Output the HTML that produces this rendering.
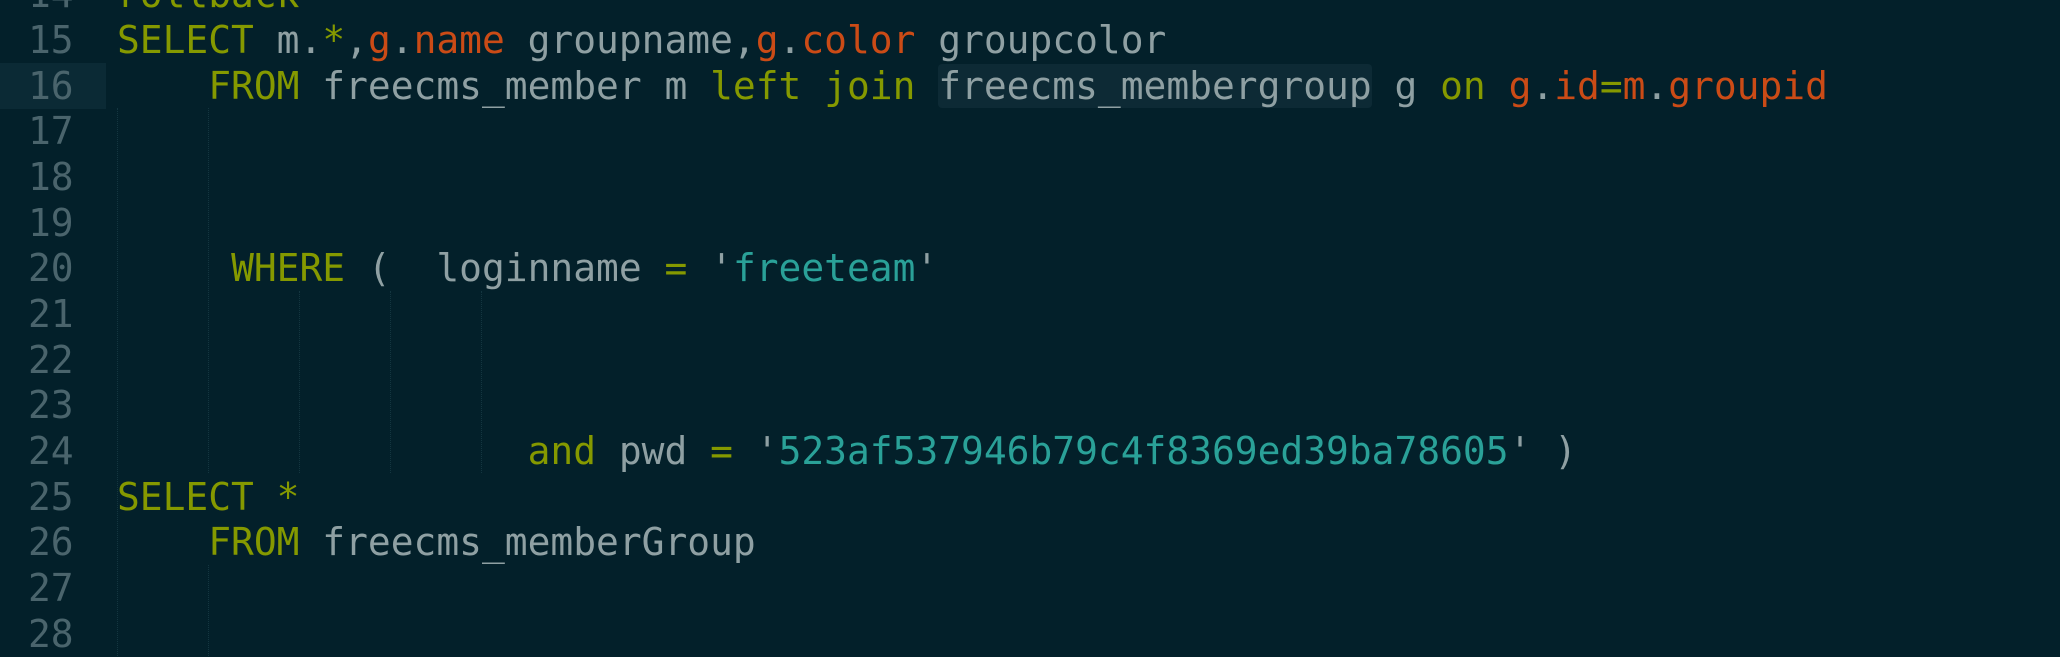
<!DOCTYPE html>
<html><head><meta charset="utf-8"><style>
html,body{margin:0;padding:0;width:2060px;height:656px;overflow:hidden;background:#03202a;}
.ln{position:absolute;left:0;width:108px;height:46px;font:37.9px/46px "DejaVu Sans Mono",monospace;color:#4a646c;}
.ln span{position:absolute;left:28px;}
.cl{position:absolute;left:117px;height:46px;font:37.9px/46px "DejaVu Sans Mono",monospace;color:#8fa0a3;white-space:pre;}
.k{color:#859900}.o{color:#cb4b16}.s{color:#2aa198}
.hl{background:#0d2a35;border-radius:4px;}
.g{position:absolute;width:0;border-left:1px dotted #143640;}
.cur{position:absolute;left:0;top:63px;width:106px;height:46px;background:#0b2a35;}
</style></head><body>
<div class="cur"></div>
<div class="g" style="left:117px;top:108px;height:548px"></div>
<div class="g" style="left:208px;top:108px;height:365px"></div>
<div class="g" style="left:299px;top:291px;height:182px"></div>
<div class="g" style="left:390px;top:291px;height:182px"></div>
<div class="g" style="left:481px;top:291px;height:182px"></div>
<div class="g" style="left:208px;top:565px;height:91px"></div>

<div class="ln" style="top:-29px"><span>14</span></div>
<div class="cl" style="top:-29px"><span class="k">rollback</span></div>
<div class="ln" style="top:17px"><span>15</span></div>
<div class="cl" style="top:17px"><span class="k">SELECT</span> m.<span class="k">*</span>,<span class="o">g</span>.<span class="o">name</span> groupname,<span class="o">g</span>.<span class="o">color</span> groupcolor</div>
<div class="ln" style="top:63px"><span>16</span></div>
<div class="cl" style="top:63px">    <span class="k">FROM</span> freecms_member m <span class="k">left</span> <span class="k">join</span> <span class="hl">freecms_membergroup</span> g <span class="k">on</span> <span class="o">g</span>.<span class="o">id</span><span class="k">=</span><span class="o">m</span>.<span class="o">groupid</span></div>
<div class="ln" style="top:108px"><span>17</span></div>
<div class="ln" style="top:154px"><span>18</span></div>
<div class="ln" style="top:200px"><span>19</span></div>
<div class="ln" style="top:245px"><span>20</span></div>
<div class="cl" style="top:245px">     <span class="k">WHERE</span> (  loginname <span class="k">=</span> '<span class="s">freeteam</span>'</div>
<div class="ln" style="top:291px"><span>21</span></div>
<div class="ln" style="top:337px"><span>22</span></div>
<div class="ln" style="top:382px"><span>23</span></div>
<div class="ln" style="top:428px"><span>24</span></div>
<div class="cl" style="top:428px">                  <span class="k">and</span> pwd <span class="k">=</span> '<span class="s">523af537946b79c4f8369ed39ba78605</span>' )</div>
<div class="ln" style="top:474px"><span>25</span></div>
<div class="cl" style="top:474px"><span class="k">SELECT *</span></div>
<div class="ln" style="top:519px"><span>26</span></div>
<div class="cl" style="top:519px">    <span class="k">FROM</span> freecms_memberGroup</div>
<div class="ln" style="top:565px"><span>27</span></div>
<div class="ln" style="top:611px"><span>28</span></div>
</body></html>
